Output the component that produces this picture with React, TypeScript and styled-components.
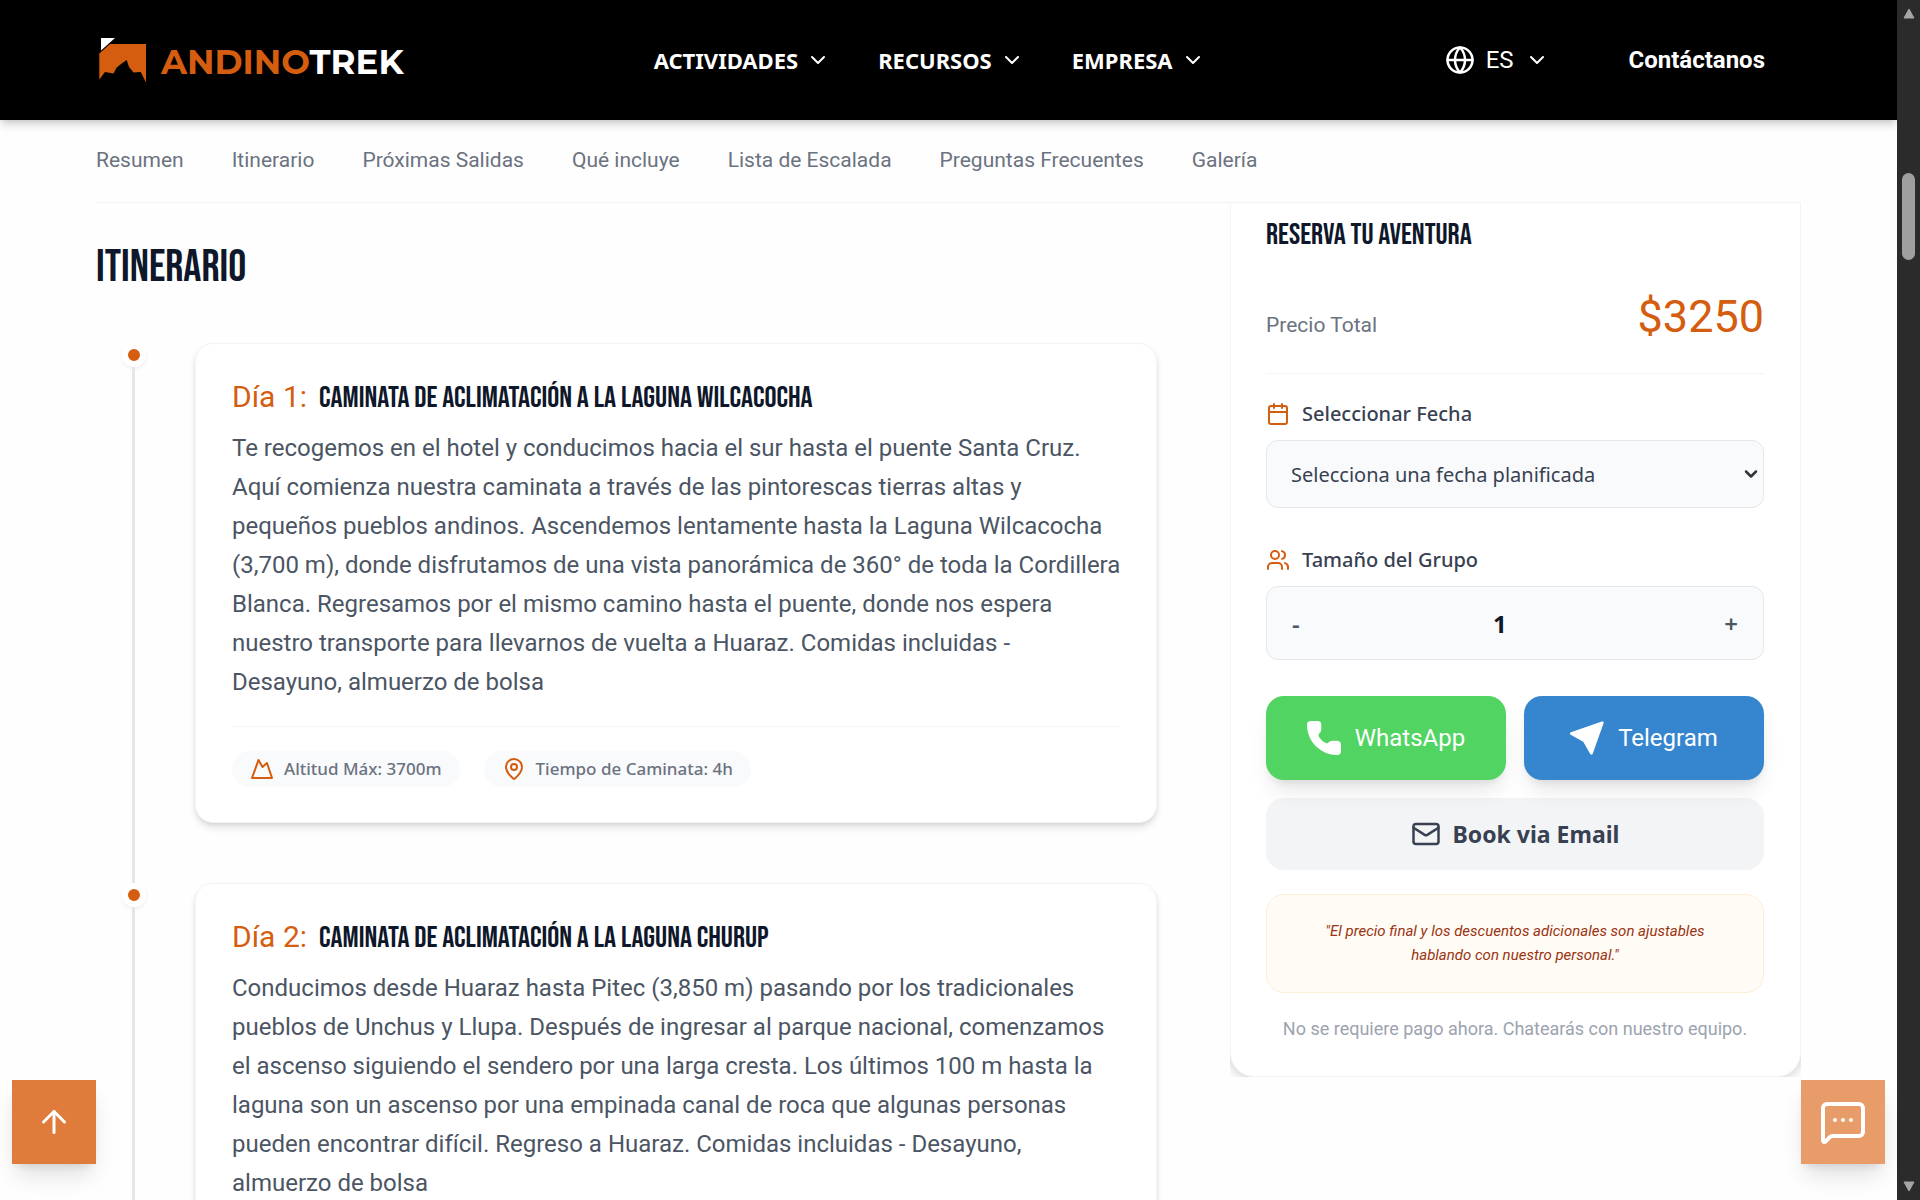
import React, { useState } from "react";
import styled, { createGlobalStyle } from "styled-components";
import { ArrowUp, Calendar, ChevronDown, Globe, Mail, MapPin, MessageSquareMore, Users } from "lucide-react";

const sans = `Roboto, "Liberation Sans", sans-serif`;
const humanist = `"Noto Sans", "Open Sans", sans-serif`;
const display = `"Bebas Neue", "Liberation Sans Narrow", "Roboto Condensed", "Liberation Sans", sans-serif`;
const orange = "#d45d0f";

const GlobalStyle = createGlobalStyle`
  *, *::before, *::after { box-sizing: border-box; }
  html, body { margin: 0; height: 100%; overflow: hidden; }
  #root { height: 100%; }
  body { font-family: ${sans}; background: #fefefe; color: #111827; }
  button, input, select { font: inherit; color: inherit; }
  h1, h2, h3, p { margin: 0; }
  a { color: inherit; text-decoration: none; }
  svg { flex: none; }
`;

const Shell = styled.div`
  display: flex;
  height: 100vh;
  overflow: hidden;
`;

const Page = styled.div`
  flex: 1;
  min-width: 0;
  overflow: hidden;
`;

const Header = styled.header`
  position: relative;
  height: 120px;
  padding: 0 132px 0 99px;
  display: flex;
  align-items: center;
  justify-content: space-between;
  background: #000;
  color: #fff;
  box-shadow: 0 6px 9px -1px rgba(0, 0, 0, 0.14), 0 3px 6px -2px rgba(0, 0, 0, 0.12);
`;

const Logo = styled.a`
  display: flex;
  align-items: center;
  gap: 15px;
  padding-right: 10px;
  font: 700 34px/44px Montserrat, Inter, ${sans};
  span { padding-top: 3px; }
  b { color: ${orange}; font-weight: 700; }
`;

const MainNav = styled.nav`
  display: flex;
  gap: 48px;
`;

const NavButton = styled.button`
  display: flex;
  align-items: center;
  gap: 8px;
  padding: 0;
  border: 0;
  background: none;
  font: 700 22px/30px ${humanist};
`;

const HeaderTools = styled.div`
  display: flex;
  align-items: center;
  gap: 80px;
  font-size: 24px;
`;

const Language = styled.button`
  display: flex;
  align-items: center;
  gap: 11px;
  padding: 0;
  border: 0;
  background: none;
`;

const Contact = styled.a`
  font-weight: 700;
`;

const Body = styled.div`
  padding: 0 96px;
`;

const Tabs = styled.nav`
  height: 83px;
  display: flex;
  gap: 48px;
  padding-top: 27px;
  border-bottom: 1px solid #f3f4f6;
  font-size: 21px;
  line-height: 26px;
  color: #6b7280;
`;

const Columns = styled.div`
  display: grid;
  grid-template-columns: minmax(0, 1061px) minmax(0, 571px);
  justify-content: space-between;
  align-items: start;
`;

const SectionTitle = styled.h2`
  margin: 38px 0 48px;
  font: 400 45px/54px ${display};
  color: #0f172a;
`;

const Day = styled.article`
  display: grid;
  grid-template-columns: 75px minmax(0, 1fr);
  column-gap: 24px;
`;

const Rail = styled.div`
  display: flex;
  flex-direction: column;
  align-items: center;
`;

const Dot = styled.span`
  width: 24px;
  height: 24px;
  border: 6px solid #fff;
  border-radius: 50%;
  background: ${orange};
  box-shadow: 0 2px 4px rgba(0, 0, 0, 0.06);
`;

const Line = styled.span`
  flex: 1;
  width: 3px;
  background: #e5e6e8;
`;

const DayCard = styled.div`
  margin-bottom: 60px;
  padding: 34px 35px 35px 36px;
  border: 1px solid #f3f4f6;
  border-radius: 18px;
  background: #fff;
  box-shadow: 0 5px 8px -1px rgba(0, 0, 0, 0.12), 0 2px 5px -2px rgba(0, 0, 0, 0.12);
`;

const DayHeading = styled.h3`
  display: flex;
  align-items: baseline;
  gap: 12px;
  margin-bottom: 12px;
  font: 400 30px/38px ${display};
  color: #0f172a;
  span { font: 400 30px/38px ${sans}; color: ${orange}; }
`;

const DayText = styled.p`
  font-size: 24px;
  line-height: 39px;
  color: #4b5563;
`;

const Chips = styled.div`
  display: flex;
  gap: 24px;
  margin-top: 24px;
  padding-top: 24px;
  border-top: 1px solid #f3f4f6;
`;

const Chip = styled.span`
  display: flex;
  align-items: center;
  gap: 10px;
  padding: 5px 18px;
  border-radius: 18px;
  background: #f9fafb;
  font: 500 17px/26px ${humanist};
  color: #6b7280;
  svg { color: ${orange}; }
`;

const BookingClip = styled.aside`
  overflow: hidden;
`;

const Booking = styled.form`
  padding: 14px 36px 35px 35px;
  border: 1px solid #f3f4f6;
  border-top: 0;
  border-radius: 0 0 24px 24px;
  background: #fff;
  box-shadow: 0 0 12px rgba(0, 0, 0, 0.25);
`;

const BookingTitle = styled.h2`
  font: 400 30px/36px ${display};
  color: #0f172a;
`;

const PriceRow = styled.div`
  display: flex;
  align-items: baseline;
  justify-content: space-between;
  margin: 37px 0 25px;
  padding-bottom: 29px;
  border-bottom: 1px solid #f3f4f6;
  font-size: 21px;
  color: #6b7280;
  strong { font-size: 45px; line-height: 54px; font-weight: 400; color: ${orange}; }
`;

const FieldLabel = styled.label`
  display: flex;
  align-items: center;
  gap: 12px;
  margin-bottom: 11px;
  font: 500 20px/30px ${humanist};
  color: #374151;
  svg { color: ${orange}; }
`;

const SelectBox = styled.div`
  display: grid;
  align-items: center;
  margin-bottom: 37px;
  > * { grid-area: 1 / 1; }
  svg { justify-self: end; margin-right: 3px; pointer-events: none; }
`;

const DateSelect = styled.select`
  appearance: none;
  width: 100%;
  height: 68px;
  padding: 2px 24px 0;
  border: 1px solid #e5e7eb;
  border-radius: 12px;
  background: #f9fafb;
  font: 400 20px/30px ${humanist};
  color: #374151;
`;

const Stepper = styled.div`
  display: flex;
  align-items: center;
  height: 74px;
  padding: 2px 12px 0;
  border: 1px solid #e5e7eb;
  border-radius: 12px;
  background: #f9fafb;
`;

const StepButton = styled.button`
  padding: 0 13px;
  border: 0;
  background: none;
  font: 600 24px/36px ${humanist};
  color: #4b5563;
`;

const Count = styled.input`
  flex: 1;
  min-width: 0;
  padding: 0 24px 0 0;
  border: 0;
  background: none;
  text-align: center;
  font: 700 24px/36px ${humanist};
`;

const ChatRow = styled.div`
  position: relative;
  display: grid;
  grid-template-columns: 1fr 1fr;
  gap: 18px;
  margin: 36px 0 18px;
`;

const ChatButton = styled.button<{ $color: string }>`
  display: flex;
  align-items: center;
  justify-content: center;
  gap: 14px;
  height: 84px;
  border: 0;
  border-radius: 18px;
  background: ${(p) => p.$color};
  color: #fff;
  font-size: 24px;
  box-shadow: 0 15px 22px -4px rgba(0, 0, 0, 0.09), 0 6px 9px -4px rgba(0, 0, 0, 0.09);
`;

const EmailButton = styled.button`
  display: flex;
  align-items: center;
  justify-content: center;
  gap: 12px;
  width: 100%;
  height: 72px;
  border: 0;
  border-radius: 18px;
  background: #f3f4f6;
  font: 700 23px/36px ${humanist};
  color: #374151;
`;

const Note = styled.p`
  margin: 24px 0;
  padding: 24px 48px 25px;
  border: 1px solid #ffedd5;
  border-radius: 18px;
  background: #fffbf5;
  text-align: center;
  font-size: 15px;
  line-height: 24px;
  font-style: italic;
  color: #9a3412;
`;

const Disclaimer = styled.p`
  text-align: center;
  font-size: 18px;
  line-height: 24px;
  color: #9ca3af;
`;

const FloatButton = styled.button<{ $side: "left" | "right"; $color: string }>`
  position: fixed;
  bottom: 36px;
  ${(p) => (p.$side === "left" ? "left: 12px;" : "right: 35px;")}
  width: 84px;
  height: 84px;
  display: grid;
  place-items: center;
  padding: 0;
  border: 0;
  background: ${(p) => p.$color};
  color: #fff;
  box-shadow: 0 15px 22px -4px rgba(0, 0, 0, 0.12), 0 6px 9px -4px rgba(0, 0, 0, 0.1);
`;

const Scrollbar = styled.div`
  width: 23px;
  display: flex;
  flex-direction: column;
  align-items: center;
  justify-content: space-between;
  padding: 8px 0;
  background: #2b2b2b;
`;

const Track = styled.div`
  flex: 1;
  padding-top: 154px;
`;

const Thumb = styled.div`
  width: 13px;
  height: 87px;
  border-radius: 7px;
  background: #9f9f9f;
`;

const LogoMark = () => (
  <svg width="47" height="45" viewBox="0 0 47 45" aria-hidden="true">
    <path d="M11 6H47V44.500L41.700 34L34.500 34.500L30 29L27.700 22L22.700 25.500L17.700 29.500L14.500 35.500L6 34L0.300 41.500V15.500Z" fill={orange} />
    <path d="M2 0H16L2 12.500Z" fill="#fff" />
  </svg>
);

const PeakIcon = () => (
  <svg width="24" height="24" viewBox="0 0 24 24" fill="none" stroke="currentColor" strokeWidth="2" strokeLinejoin="round" aria-hidden="true">
    <path d="M2 21L8.500 3L12.500 10L17 6L22 21Z" />
  </svg>
);

const PhoneIcon = () => (
  <svg width="34" height="34" viewBox="0 0 100 100" fill="currentColor" aria-hidden="true">
    <path d="M11 0H31Q42 0 42 11V24Q42 32 36 37Q32 40 35 46Q43 59 55 65Q60 67 63 63Q67 58 75 58H89Q100 60 100 70V89Q100 100 89 100C40 100 0 60 0 11Q0 0 11 0Z" />
  </svg>
);

const PlaneIcon = () => (
  <svg width="34" height="34" viewBox="0 0 100 100" fill="currentColor" stroke="currentColor" strokeWidth="8" strokeLinejoin="round" aria-hidden="true">
    <path d="M4 37L95 5L63 95L42 58Z" />
  </svg>
);

const menus = ["ACTIVIDADES", "RECURSOS", "EMPRESA"];
const tabs = ["Resumen", "Itinerario", "Próximas Salidas", "Qué incluye", "Lista de Escalada", "Preguntas Frecuentes", "Galería"];

const days = [
  {
    title: "CAMINATA DE ACLIMATACIÓN A LA LAGUNA WILCACOCHA",
    text: "Te recogemos en el hotel y conducimos hacia el sur hasta el puente Santa Cruz. Aquí comienza nuestra caminata a través de las pintorescas tierras altas y pequeños pueblos andinos. Ascendemos lentamente hasta la Laguna Wilcacocha (3,700 m), donde disfrutamos de una vista panorámica de 360° de toda la Cordillera Blanca. Regresamos por el mismo camino hasta el puente, donde nos espera nuestro transporte para llevarnos de vuelta a Huaraz. Comidas incluidas - Desayuno, almuerzo de bolsa",
    altitude: "3700m",
    time: "4h",
  },
  {
    title: "CAMINATA DE ACLIMATACIÓN A LA LAGUNA CHURUP",
    text: "Conducimos desde Huaraz hasta Pitec (3,850 m) pasando por los tradicionales pueblos de Unchus y Llupa. Después de ingresar al parque nacional, comenzamos el ascenso siguiendo el sendero por una larga cresta. Los últimos 100 m hasta la laguna son un ascenso por una empinada canal de roca que algunas personas pueden encontrar difícil. Regreso a Huaraz. Comidas incluidas - Desayuno, almuerzo de bolsa",
    altitude: "",
    time: "",
  },
];

export default function App() {
  const [count, setCount] = useState(1);
  return (
    <Shell>
      <GlobalStyle />
      <Page>
        <Header>
          <Logo href="#">
            <LogoMark />
            <span><b>ANDINO</b>TREK</span>
          </Logo>
          <MainNav>
            {menus.map((m) => (
              <NavButton key={m} type="button">{m}<ChevronDown size={24} /></NavButton>
            ))}
          </MainNav>
          <HeaderTools>
            <Language type="button"><Globe size={30} />ES<ChevronDown size={24} /></Language>
            <Contact href="#contacto">Contáctanos</Contact>
          </HeaderTools>
        </Header>
        <Body>
          <Tabs>
            {tabs.map((t) => <a key={t} href="#itinerario">{t}</a>)}
          </Tabs>
          <Columns>
            <main>
              <SectionTitle id="itinerario">ITINERARIO</SectionTitle>
              {days.map((d, i) => (
                <Day key={d.title}>
                  <Rail><Dot /><Line /></Rail>
                  <DayCard>
                    <DayHeading><span>Día {i + 1}:</span>{d.title}</DayHeading>
                    <DayText>{d.text}</DayText>
                    {d.altitude && (
                      <Chips>
                        <Chip><PeakIcon />Altitud Máx: {d.altitude}</Chip>
                        <Chip><MapPin size={24} />Tiempo de Caminata: {d.time}</Chip>
                      </Chips>
                    )}
                  </DayCard>
                </Day>
              ))}
            </main>
            <BookingClip>
              <Booking onSubmit={(e) => e.preventDefault()}>
                <BookingTitle>RESERVA TU AVENTURA</BookingTitle>
                <PriceRow>Precio Total<strong>$3250</strong></PriceRow>
                <FieldLabel htmlFor="fecha"><Calendar size={24} />Seleccionar Fecha</FieldLabel>
                <SelectBox>
                  <DateSelect id="fecha"><option>Selecciona una fecha planificada</option></DateSelect>
                  <ChevronDown size={20} strokeWidth={3} color="#333" />
                </SelectBox>
                <FieldLabel htmlFor="grupo"><Users size={24} />Tamaño del Grupo</FieldLabel>
                <Stepper>
                  <StepButton type="button" onClick={() => setCount(Math.max(1, count - 1))}>-</StepButton>
                  <Count id="grupo" inputMode="numeric" value={count} onChange={(e) => setCount(Number(e.target.value) || 1)} />
                  <StepButton type="button" onClick={() => setCount(count + 1)}>+</StepButton>
                </Stepper>
                <ChatRow>
                  <ChatButton type="button" $color="#51d462"><PhoneIcon />WhatsApp</ChatButton>
                  <ChatButton type="button" $color="#3686cf"><PlaneIcon />Telegram</ChatButton>
                </ChatRow>
                <EmailButton type="button"><Mail size={30} />Book via Email</EmailButton>
                <Note>"El precio final y los descuentos adicionales son ajustables hablando con nuestro personal."</Note>
                <Disclaimer>No se requiere pago ahora. Chatearás con nuestro equipo.</Disclaimer>
              </Booking>
            </BookingClip>
          </Columns>
        </Body>
      </Page>
      <Scrollbar aria-hidden="true">
        <svg width="12" height="11" viewBox="0 0 12 11"><path d="M6 1L11 10H1Z" fill="#a5a5a5" stroke="#a5a5a5" strokeLinejoin="round" /></svg>
        <Track><Thumb /></Track>
        <svg width="12" height="11" viewBox="0 0 12 11"><path d="M6 10L11 1H1Z" fill="#a5a5a5" stroke="#a5a5a5" strokeLinejoin="round" /></svg>
      </Scrollbar>
      <FloatButton type="button" $side="left" $color="#df7c3c" aria-label="Volver arriba"><ArrowUp size={36} /></FloatButton>
      <FloatButton type="button" $side="right" $color="#e89c6a" aria-label="Abrir chat"><MessageSquareMore size={48} /></FloatButton>
    </Shell>
  );
}
